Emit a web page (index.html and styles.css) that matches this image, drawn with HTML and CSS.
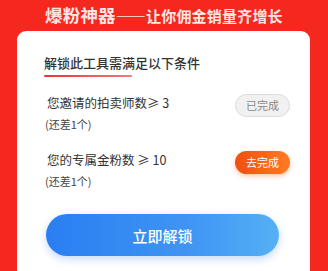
FILE: index.html
```html
<!DOCTYPE html>
<html lang="zh">
<head>
    <meta charset="UTF-8">
    <meta name="viewport" content="width=device-width, initial-scale=1.0">
    <title>爆粉神器</title>
    <link rel="stylesheet" href="styles.css">
</head>
<body>
    <h1 class="headline"><span class="big">爆粉神器</span>——让你佣金销量齐增长</h1>
    <div class="card">
        <h2 class="card-title">解锁此工具需满足以下条件</h2>
        <div class="task">
            <div class="task-info">
                <div class="task-name">您邀请的拍卖师数≥ 3</div>
                <div class="task-left">(还差1个)</div>
            </div>
            <span class="badge done">已完成</span>
        </div>
        <div class="task">
            <div class="task-info">
                <div class="task-name">您的专属金粉数 ≥ 10</div>
                <div class="task-left">(还差1个)</div>
            </div>
            <span class="badge todo">去完成</span>
        </div>
        <button class="unlock">立即解锁</button>
    </div>
</body>
</html>
```

FILE: styles.css
```css
body {
    margin: 0;
    height: 271px;
    overflow: hidden;
    background-color: #f5281f;
    font-family: "Noto Sans CJK SC", "Noto Sans", sans-serif;
    color: #333;
}
.headline {
    margin: 0;
    padding: 2px 0 0 45px;
    height: 29px;
    box-sizing: border-box;
    font-size: 15px;
    font-weight: 700;
    color: #fde6e3;
    white-space: nowrap;
    letter-spacing: 0.2px;
}
.headline .big {
    font-size: 17.5px;
}
.card {
    margin: 2px 18px 0 17px;
    background: #fff;
    border-radius: 9px 9px 0 0;
    padding: 18px 20px 0 27px;
    height: 240px;
    box-sizing: border-box;
}
.card-title {
    margin: 0;
    display: inline-block;
    position: relative;
    font-size: 13px;
    font-weight: 500;
    color: #333;
    line-height: 22px;
}
.card-title::after {
    content: "";
    position: absolute;
    left: 0;
    bottom: -3px;
    width: 88px;
    height: 2px;
    border-radius: 1px;
    background: linear-gradient(to right, #e8323a, #f07a7e);
}
.task {
    display: flex;
    align-items: center;
    justify-content: space-between;
    padding-left: 3px;
    margin-top: 20px;
}
.task-name {
    font-size: 12.5px;
    line-height: 18px;
    color: #333;
}
.task-left {
    margin-top: 5px;
    margin-left: -2px;
    font-size: 11px;
    line-height: 14px;
    color: #444;
}
.badge {
    width: 55px;
    height: 23px;
    box-sizing: border-box;
    border-radius: 12px;
    font-size: 11px;
    line-height: 23px;
    text-align: center;
    margin-bottom: 14px;
}
.badge.done {
    background: #f1f1f1;
    border: 1px solid #dcdcdc;
    line-height: 21px;
    color: #888;
}
.badge.todo {
    background: linear-gradient(to right, #ee5010, #ff7a24);
    color: #fff;
    box-shadow: 0 2px 5px rgba(255, 110, 40, 0.4);
}
.unlock {
    display: block;
    margin: 26px 0 0 2px;
    width: 233px;
    height: 42px;
    border: none;
    border-radius: 21px;
    background: linear-gradient(to right, #2a7ef2, #3f94f3 60%, #55b0f6);
    color: #fff;
    font-family: inherit;
    font-size: 15px;
    font-weight: 500;
    box-shadow: 0 3px 8px rgba(60, 130, 240, 0.3);
}
```
